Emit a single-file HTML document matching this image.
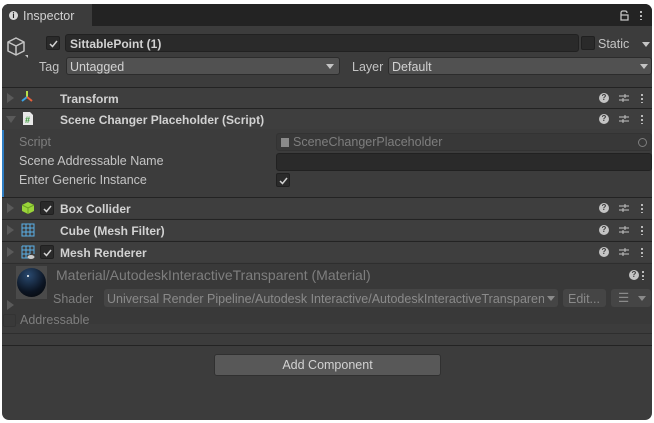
<!DOCTYPE html>
<html><head><meta charset="utf-8"><style>
*{box-sizing:border-box;margin:0;padding:0}
body{width:654px;height:423px;background:#fff;font-family:"Liberation Sans",sans-serif;font-size:12.5px;color:#c4c4c4;position:relative;overflow:hidden}
.p{position:absolute;left:2px;top:4px;width:650px;height:416px;background:#3c3c3c;border-radius:7px;overflow:hidden}
.w{position:absolute;left:-2px;top:0;width:654px;height:416px}
.a{position:absolute}
.tabbar{left:0;top:0;width:654px;height:22px;background:#232323}
.tab{left:2px;top:0;width:90px;height:22px;background:#3c3c3c;border-radius:6px 0 0 0}
.hdr{position:absolute;left:0;width:654px;height:21px;background:#3e3e3e;border-top:1px solid #232323}
.b{font-weight:bold;color:#d2d2d2;font-size:12px}
.t{position:absolute;white-space:nowrap;line-height:14px}
.tri{position:absolute;width:0;height:0;border-top:5px solid transparent;border-bottom:5px solid transparent;border-left:7px solid #5a5a5a}
.trid{position:absolute;width:0;height:0;border-left:5px solid transparent;border-right:5px solid transparent;border-top:7px solid #5a5a5a}
.cb{position:absolute;width:14px;height:14px;background:#2a2a2a;border:1px solid #202020;border-radius:2px}
.cb svg{position:absolute;left:1px;top:1px}
.fld{position:absolute;background:#2a2a2a;border:1px solid #212121;border-radius:3px}
.dd{position:absolute;background:#515151;border:1px solid #2c2c2c;border-radius:3px}
.ic{position:absolute}
.dots{position:absolute;width:2px;height:10px;background:radial-gradient(circle,#c4c4c4 1px,transparent 1.2px) 0 0/2px 4px}
.q{position:absolute;width:10px;height:10px;border-radius:50%;background:#c4c4c4;color:#3c3c3c;font-size:8px;font-weight:bold;text-align:center;line-height:10px}
</style></head><body>
<div class="p"><div class="w">
<div class="a tabbar"></div>
<div class="a tab"></div>
<div class="a" style="left:9px;top:7px;width:9px;height:9px;border-radius:50%;background:#d8d8d8;color:#232323;font-size:8px;font-weight:bold;text-align:center;line-height:9px">i</div>
<div class="t" style="left:23px;top:5px;color:#d2d2d2">Inspector</div>
<svg class="ic" style="left:619px;top:6px" width="12" height="11"><path d="M2 10V5H9V10ZM2 5V3Q2 1 4 1H6Q8 1 8 3" fill="none" stroke="#c4c4c4" stroke-width="1.3"/></svg>
<div class="dots" style="left:640px;top:6px"></div>

<svg class="ic" style="left:6px;top:32px" width="22" height="24"><path d="M10 2L18 6V15L10 19L2 15V6ZM2 6L10 10L18 6M10 10V19" fill="none" stroke="#c4c4c4" stroke-width="1.5" stroke-linejoin="round"/><path d="M24 21L30 21L27 24Z" fill="#c4c4c4" transform="translate(-5,-2)"/></svg>
<div class="cb" style="left:46px;top:32px"><svg width="11" height="11"><path d="M2 6L4.5 8.5L9 3" fill="none" stroke="#d2d2d2" stroke-width="1.5"/></svg></div>
<div class="fld" style="left:65px;top:30px;width:514px;height:18px"></div>
<div class="t b" style="left:70px;top:33px">SittablePoint (1)</div>
<div class="cb" style="left:581px;top:32px"></div>
<div class="t" style="left:598px;top:33px">Static</div>
<div class="trid" style="left:642px;top:38px;border-top-color:#c4c4c4;border-width:5px 4px 0 4px"></div>
<div class="t" style="left:39px;top:56px">Tag</div>
<div class="dd" style="left:66px;top:53px;width:274px;height:18px"></div>
<div class="t" style="left:70px;top:56px;color:#d2d2d2">Untagged</div>
<div class="trid" style="left:326px;top:60px;border-top-color:#c4c4c4;border-width:5px 4px 0 4px"></div>
<div class="t" style="left:352px;top:56px">Layer</div>
<div class="dd" style="left:388px;top:53px;width:264px;height:18px"></div>
<div class="t" style="left:392px;top:56px;color:#d2d2d2">Default</div>
<div class="trid" style="left:640px;top:60px;border-top-color:#c4c4c4;border-width:5px 4px 0 4px"></div>

<div class="hdr" style="top:83px"></div>
<div class="tri" style="left:7px;top:89px"></div>
<svg class="ic" style="left:20px;top:86px" width="14" height="14"><path d="M7 1V7" stroke="#b8e04a" stroke-width="2"/><path d="M7 7L2 11" stroke="#3aa4e8" stroke-width="2"/><path d="M7 7L12 11" stroke="#e8603a" stroke-width="2"/></svg>
<div class="t b" style="left:60px;top:88px">Transform</div>
<div class="hdr" style="top:104px"></div>
<div class="trid" style="left:6px;top:112px"></div>
<svg class="ic" style="left:22px;top:107px" width="12" height="15"><path d="M1 1H8L11 4V14H1Z" fill="#e8e8e8"/><text x="3" y="12" font-size="9" font-weight="bold" fill="#3a9a3a" font-family="Liberation Sans">#</text></svg>
<div class="t b" style="left:60px;top:109px">Scene Changer Placeholder (Script)</div>
<div class="a" style="left:2px;top:126px;width:2px;height:68px;background:#2f7ec4"></div>
<div class="t" style="left:19px;top:131px;color:#7e7e7e">Script</div>
<div class="fld" style="left:276px;top:129px;width:376px;height:18px;background:#383838;border-color:#333"></div>
<div class="a" style="left:281px;top:134px;width:8px;height:9px;background:#8a8a8a"></div>
<div class="t" style="left:293px;top:131px;color:#7e7e7e">SceneChangerPlaceholder</div>
<div class="a" style="left:638px;top:134px;width:9px;height:9px;border:1px solid #7e7e7e;border-radius:50%"></div>
<div class="t" style="left:19px;top:150px">Scene Addressable Name</div>
<div class="fld" style="left:276px;top:149px;width:376px;height:18px"></div>
<div class="t" style="left:19px;top:169px">Enter Generic Instance</div>
<div class="cb" style="left:276px;top:169px"><svg width="11" height="11"><path d="M2 6L4.5 8.5L9 3" fill="none" stroke="#d2d2d2" stroke-width="1.5"/></svg></div>

<div class="hdr" style="top:193px"></div>
<div class="tri" style="left:7px;top:199px"></div>
<svg class="ic" style="left:21px;top:197px" width="14" height="14"><path d="M7 1L13 4V10L7 13L1 10V4Z" fill="#9ad43a"/><path d="M1 4L7 7L13 4M7 7V13" stroke="#6aa020" fill="none"/></svg>
<div class="cb" style="left:40px;top:197px"><svg width="11" height="11"><path d="M2 6L4.5 8.5L9 3" fill="none" stroke="#d2d2d2" stroke-width="1.5"/></svg></div>
<div class="t b" style="left:60px;top:198px">Box Collider</div>
<div class="hdr" style="top:215px"></div>
<div class="tri" style="left:7px;top:221px"></div>
<svg class="ic" style="left:21px;top:219px" width="14" height="14"><path d="M1 1H13V13H1ZM5 1V13M9 1V13M1 5H13M1 9H13" fill="none" stroke="#5ab0e8" stroke-width="1"/></svg>
<div class="t b" style="left:60px;top:220px">Cube (Mesh Filter)</div>
<div class="hdr" style="top:237px"></div>
<div class="tri" style="left:7px;top:243px"></div>
<svg class="ic" style="left:21px;top:241px" width="14" height="15"><path d="M1 1H13V9M1 1V13H8M5 1V13M9 1V9M1 5H13M1 9H9" fill="none" stroke="#5ab0e8" stroke-width="1"/><ellipse cx="10" cy="12" rx="3.5" ry="2" fill="#ccc"/></svg>
<div class="cb" style="left:40px;top:241px"><svg width="11" height="11"><path d="M2 6L4.5 8.5L9 3" fill="none" stroke="#d2d2d2" stroke-width="1.5"/></svg></div>
<div class="t b" style="left:60px;top:242px">Mesh Renderer</div>
<div class="q" style="left:599px;top:89px">?</div><div class="q" style="left:599px;top:110px">?</div>
<div class="q" style="left:599px;top:199px">?</div><div class="q" style="left:599px;top:221px">?</div><div class="q" style="left:599px;top:243px">?</div>
<svg class="ic" style="left:618px;top:88px" width="12" height="12"><path d="M1 4H11M1 8H11M7 2V6M5 6V10" stroke="#c4c4c4"/></svg>
<svg class="ic" style="left:618px;top:109px" width="12" height="12"><path d="M1 4H11M1 8H11M7 2V6M5 6V10" stroke="#c4c4c4"/></svg>
<svg class="ic" style="left:618px;top:198px" width="12" height="12"><path d="M1 4H11M1 8H11M7 2V6M5 6V10" stroke="#c4c4c4"/></svg>
<svg class="ic" style="left:618px;top:220px" width="12" height="12"><path d="M1 4H11M1 8H11M7 2V6M5 6V10" stroke="#c4c4c4"/></svg>
<svg class="ic" style="left:618px;top:242px" width="12" height="12"><path d="M1 4H11M1 8H11M7 2V6M5 6V10" stroke="#c4c4c4"/></svg>
<div class="dots" style="left:641px;top:89px"></div><div class="dots" style="left:641px;top:110px"></div>
<div class="dots" style="left:641px;top:199px"></div><div class="dots" style="left:641px;top:221px"></div><div class="dots" style="left:641px;top:243px"></div>

<div class="a" style="left:0;top:259px;width:654px;height:61px;background:#393939;border-top:1px solid #2e2e2e"></div>
<div class="a" style="left:16px;top:262px;width:31px;height:33px;background:#4a4a4a"></div>
<div class="a" style="left:17px;top:264px;width:29px;height:29px;border-radius:50%;background:radial-gradient(circle at 40% 25%,#2a4a70,#0b1422 60%,#050505)"></div>
<div class="a" style="left:27px;top:271px;width:2px;height:2px;background:#fff;border-radius:50%"></div>
<div class="tri" style="left:7px;top:296px;border-left-color:#5a5a5a"></div>
<div class="t" style="left:56px;top:264px;color:#7e7e7e;font-size:14px">Material/AutodeskInteractiveTransparent (Material)</div>
<div class="q" style="left:629px;top:266px">?</div>
<div class="dots" style="left:642px;top:266px"></div>
<div class="t" style="left:53px;top:288px;color:#7e7e7e">Shader</div>
<div class="a" style="left:104px;top:285px;width:454px;height:18px;background:#454545;border-radius:3px"></div>
<div class="t" style="left:107px;top:288px;color:#8a8a8a;width:437px;overflow:hidden">Universal Render Pipeline/Autodesk Interactive/AutodeskInteractiveTransparent</div>
<div class="trid" style="left:547px;top:292px;border-top-color:#8a8a8a;border-width:5px 4px 0 4px"></div>
<div class="a" style="left:563px;top:285px;width:43px;height:18px;background:#454545;border-radius:3px"></div>
<div class="t" style="left:568px;top:288px;color:#8a8a8a">Edit...</div>
<div class="a" style="left:611px;top:285px;width:40px;height:18px;background:#454545;border-radius:3px"></div>
<div class="t" style="left:618px;top:287px;color:#8a8a8a">☰</div>
<div class="trid" style="left:638px;top:292px;border-top-color:#8a8a8a;border-width:5px 4px 0 4px"></div>
<div class="a" style="left:3px;top:310px;width:13px;height:13px;background:#393939;border:1px solid #333;border-radius:2px"></div>
<div class="t" style="left:20px;top:309px;color:#7e7e7e">Addressable</div>
<div class="a" style="left:0;top:329px;width:654px;height:1px;background:#2e2e2e"></div>
<div class="a" style="left:0;top:341px;width:654px;height:1px;background:#232323"></div>
<div class="a" style="left:214px;top:350px;width:227px;height:22px;background:#585858;border:1px solid #303030;border-radius:3px;text-align:center;line-height:20px;color:#d2d2d2">Add Component</div>
</div></div>
</body></html>
